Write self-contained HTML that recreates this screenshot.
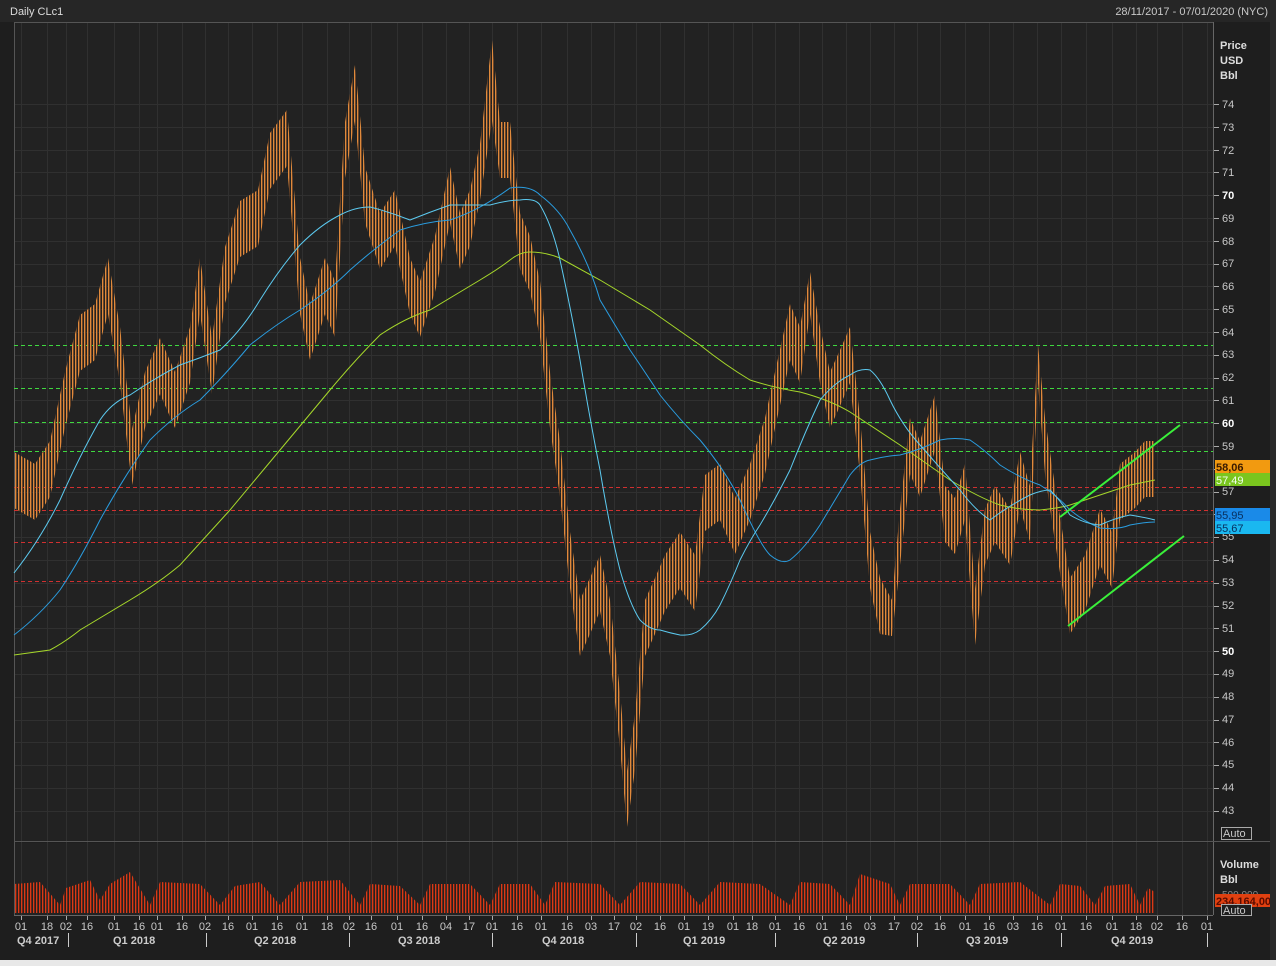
<!DOCTYPE html>
<html><head><meta charset="utf-8"><style>
body{margin:0;background:#1e1e1e;width:1276px;height:966px;overflow:hidden;font-family:"Liberation Sans",sans-serif}
svg{display:block}
text{font-family:"Liberation Sans",sans-serif;font-size:11px;fill:#c8c8c8}
</style></head><body>
<svg width="1276" height="966" xmlns="http://www.w3.org/2000/svg">
<defs>
<pattern id="ps" x="0" y="0" width="3" height="5" patternUnits="userSpaceOnUse"><rect x="0" y="0" width="1" height="5" fill="#e08a3c"/><rect x="1" y="0" width="1" height="5" fill="#6e4526"/></pattern>
<pattern id="vs" x="0" y="0" width="3" height="4" patternUnits="userSpaceOnUse"><rect x="0" y="0" width="1" height="4" fill="#d83a18"/><rect x="1" y="0" width="1" height="4" fill="#6a2414"/></pattern>
<pattern id="dg" x="14" y="0" width="7" height="2" patternUnits="userSpaceOnUse"><rect x="0" y="0" width="4" height="2" fill="#3fd83f"/></pattern>
<pattern id="dr" x="14" y="0" width="7" height="2" patternUnits="userSpaceOnUse"><rect x="0" y="0" width="4" height="2" fill="#d03030"/></pattern>
</defs>
<rect width="1276" height="966" fill="#1e1e1e"/>
<rect x="0" y="0" width="1276" height="22" fill="#262626"/>
<text x="10" y="15" style="fill:#dcdcdc">Daily CLc1</text>
<text x="1268" y="15" text-anchor="end">28/11/2017 - 07/01/2020 (NYC)</text>
<rect x="14" y="22" width="1199" height="819" fill="#222"/>
<rect x="14" y="843" width="1199" height="72" fill="#222"/>
<path fill="none" stroke="#303030" stroke-width="1" d="M21.5,22V915M47.5,22V915M66.5,22V915M87.5,22V915M114.5,22V915M139.5,22V915M157.5,22V915M182.5,22V915M205.5,22V915M228.5,22V915M252.5,22V915M277.5,22V915M302.5,22V915M327.5,22V915M349.5,22V915M371.5,22V915M397.5,22V915M422.5,22V915M446.5,22V915M469.5,22V915M492.5,22V915M517.5,22V915M541.5,22V915M567.5,22V915M591.5,22V915M614.5,22V915M636.5,22V915M660.5,22V915M684.5,22V915M708.5,22V915M733.5,22V915M752.5,22V915M775.5,22V915M799.5,22V915M822.5,22V915M846.5,22V915M870.5,22V915M894.5,22V915M917.5,22V915M940.5,22V915M965.5,22V915M989.5,22V915M1013.5,22V915M1037.5,22V915M1061.5,22V915M1086.5,22V915M1112.5,22V915M1136.5,22V915M1157.5,22V915M1182.5,22V915M1207.5,22V915
M14,104.5H1213M14,127.5H1213M14,150.5H1213M14,172.5H1213M14,195.5H1213M14,218.5H1213M14,241.5H1213M14,264.5H1213M14,286.5H1213M14,309.5H1213M14,332.5H1213M14,355.5H1213M14,378.5H1213M14,400.5H1213M14,423.5H1213M14,446.5H1213M14,469.5H1213M14,492.5H1213M14,514.5H1213M14,537.5H1213M14,560.5H1213M14,583.5H1213M14,606.5H1213M14,628.5H1213M14,651.5H1213M14,674.5H1213M14,697.5H1213M14,720.5H1213M14,742.5H1213M14,765.5H1213M14,788.5H1213M14,811.5H1213"/>
<path fill="none" stroke="#aaa" stroke-width="1" d="M1213,104.5h6M1213,127.5h6M1213,150.5h6M1213,172.5h6M1213,195.5h6M1213,218.5h6M1213,241.5h6M1213,264.5h6M1213,286.5h6M1213,309.5h6M1213,332.5h6M1213,355.5h6M1213,378.5h6M1213,400.5h6M1213,423.5h6M1213,446.5h6M1213,469.5h6M1213,492.5h6M1213,514.5h6M1213,537.5h6M1213,560.5h6M1213,583.5h6M1213,606.5h6M1213,628.5h6M1213,651.5h6M1213,674.5h6M1213,697.5h6M1213,720.5h6M1213,742.5h6M1213,765.5h6M1213,788.5h6M1213,811.5h6M21.5,915v5M47.5,915v5M66.5,915v5M87.5,915v5M114.5,915v5M139.5,915v5M157.5,915v5M182.5,915v5M205.5,915v5M228.5,915v5M252.5,915v5M277.5,915v5M302.5,915v5M327.5,915v5M349.5,915v5M371.5,915v5M397.5,915v5M422.5,915v5M446.5,915v5M469.5,915v5M492.5,915v5M517.5,915v5M541.5,915v5M567.5,915v5M591.5,915v5M614.5,915v5M636.5,915v5M660.5,915v5M684.5,915v5M708.5,915v5M733.5,915v5M752.5,915v5M775.5,915v5M799.5,915v5M822.5,915v5M846.5,915v5M870.5,915v5M894.5,915v5M917.5,915v5M940.5,915v5M965.5,915v5M989.5,915v5M1013.5,915v5M1037.5,915v5M1061.5,915v5M1086.5,915v5M1112.5,915v5M1136.5,915v5M1157.5,915v5M1182.5,915v5M1207.5,915v5"/>
<line x1="14" y1="22.5" x2="1213" y2="22.5" stroke="#555"/>
<line x1="14.5" y1="22" x2="14.5" y2="915" stroke="#555"/>
<line x1="1213.5" y1="22" x2="1213.5" y2="915" stroke="#666"/>
<line x1="14" y1="841.5" x2="1276" y2="841.5" stroke="#555"/>
<line x1="14" y1="915.5" x2="1213" y2="915.5" stroke="#666"/>
<rect x="14" y="345" width="1199" height="1" fill="url(#dg)"/>
<rect x="14" y="388" width="1199" height="1" fill="url(#dg)"/>
<rect x="14" y="422" width="1199" height="1" fill="url(#dg)"/>
<rect x="14" y="451" width="1199" height="1" fill="url(#dg)"/>
<rect x="14" y="487" width="1199" height="1" fill="url(#dr)"/>
<rect x="14" y="510" width="1199" height="1" fill="url(#dr)"/>
<rect x="14" y="542" width="1199" height="1" fill="url(#dr)"/>
<rect x="14" y="581" width="1199" height="1" fill="url(#dr)"/>
<polygon fill="url(#ps)" points="14,452 35,464 50,441 65,372 80,315 95,304 108,258 120,327 132,429 145,372 160,338 175,372 190,327 200,258 212,338 225,247 240,201 258,190 270,133 287,110 300,258 310,304 325,258 335,281 345,122 355,65 365,167 380,213 395,190 410,258 420,281 435,236 450,167 460,213 470,190 480,144 492,40 500,122 510,122 520,213 530,236 540,281 550,372 560,441 570,532 580,600 590,578 600,555 610,600 620,692 627,771 635,714 645,600 655,578 665,555 680,532 695,555 705,475 720,464 735,498 750,464 765,418 775,372 790,304 800,327 810,272 820,327 830,372 840,350 850,327 860,418 870,532 880,578 892,600 900,509 910,418 920,441 935,395 945,486 955,498 965,464 975,589 985,509 995,486 1010,509 1020,452 1030,486 1038,345 1045,418 1055,486 1070,578 1085,555 1100,509 1112,532 1120,464 1135,452 1145,441 1155,441 1155,497 1145,497 1135,508 1120,520 1112,588 1100,565 1085,611 1070,634 1055,542 1045,474 1038,383 1030,542 1020,508 1010,565 995,542 985,565 975,645 965,520 955,554 945,542 935,451 920,497 910,474 900,565 892,636 880,634 870,588 860,474 850,383 840,406 830,428 820,383 810,314 800,383 790,360 775,428 765,474 750,520 735,554 720,520 705,531 695,611 680,588 665,611 655,634 645,656 635,770 627,827 620,748 610,656 600,611 590,634 580,656 570,588 560,497 550,428 540,337 530,292 520,269 510,178 500,178 492,121 480,200 470,246 460,269 450,223 435,292 420,337 410,314 395,246 380,269 365,223 355,121 345,178 335,337 325,314 310,360 300,314 287,166 270,189 258,246 240,257 225,303 212,394 200,314 190,383 175,428 160,394 145,428 132,485 120,383 108,314 95,360 80,371 65,428 50,497 35,520 14,508"/>
<polygon fill="url(#vs)" points="14,884 40,882 60,905 66,888 90,880 100,900 110,884 130,872 150,905 160,882 200,884 220,905 235,886 260,882 280,905 300,882 340,880 360,905 370,884 400,886 420,905 430,884 470,884 490,905 500,884 530,884 545,905 555,882 600,884 620,905 640,882 680,884 700,905 720,882 760,884 790,905 800,882 830,884 850,905 860,874 890,884 900,905 910,884 950,884 970,905 980,884 1020,882 1050,905 1060,884 1080,886 1095,905 1105,886 1130,884 1140,905 1148,888 1155,892 1155,913 14,913"/>
<path fill="none" stroke="#a6d82a" stroke-width="1" d="M14,655 L50,650 Q65,642 80,630 L130,600 Q160,582 180,565 L230,510 L280,450 L330,390 Q355,360 380,335 Q405,318 430,310 L480,280 Q500,268 510,260 Q520,252 530,252 Q545,252 560,258 L600,280 L650,310 L700,345 Q725,365 750,380 Q775,388 800,392 Q830,400 850,412 L900,445 L950,480 Q980,498 1000,505 Q1020,510 1040,510 Q1060,508 1070,505 L1100,495 L1130,485 L1155,480"/>
<path fill="none" stroke="#2a9de0" stroke-width="1" d="M14,635 Q40,615 60,590 Q80,560 100,520 Q125,475 150,440 Q175,415 200,400 Q225,375 250,345 Q275,325 300,310 Q330,290 350,270 Q375,248 400,230 Q425,222 450,220 Q480,210 510,188 Q530,185 540,195 Q560,210 570,230 Q590,265 600,300 Q615,325 630,350 Q645,372 660,395 Q680,420 700,440 Q725,470 740,500 Q760,545 770,555 Q782,565 790,560 Q805,548 820,525 Q838,495 850,475 Q860,462 870,460 Q885,456 900,455 Q920,450 940,440 Q955,437 970,440 Q985,450 1000,465 Q1020,478 1040,485 Q1058,496 1070,510 Q1085,522 1100,528 Q1118,530 1130,525 Q1145,522 1155,522"/>
<path fill="none" stroke="#5ccaf0" stroke-width="1" d="M14,573 Q40,540 60,500 Q80,455 100,420 Q112,402 130,395 Q155,378 180,365 Q200,358 220,350 Q242,330 260,300 Q280,268 300,245 Q320,225 340,215 Q355,207 370,207 Q390,212 410,220 Q430,212 450,205 Q470,205 490,205 Q508,200 520,200 Q535,198 540,205 Q552,225 560,260 Q570,305 580,360 Q590,420 600,470 Q610,530 620,570 Q630,605 640,620 Q650,630 660,630 Q670,633 680,635 Q692,636 700,630 Q712,620 720,605 Q730,585 740,560 Q750,540 760,525 Q775,500 790,470 Q805,432 820,400 Q835,382 850,375 Q860,368 870,370 Q880,378 890,400 Q902,425 920,445 Q940,468 960,490 Q975,510 990,520 Q1010,505 1030,495 Q1042,490 1050,490 Q1060,500 1070,515 Q1085,524 1100,525 Q1115,518 1130,515 Q1143,517 1155,520"/>
<line x1="1060" y1="517" x2="1180" y2="425" stroke="#3af03a" stroke-width="2"/>
<line x1="1068" y1="626" x2="1184" y2="536" stroke="#3af03a" stroke-width="2"/>
<g>
<text x="1220" y="49" style="font-weight:bold;fill:#ddd">Price</text>
<text x="1220" y="64" style="font-weight:bold;fill:#ddd">USD</text>
<text x="1220" y="79" style="font-weight:bold;fill:#ddd">Bbl</text>
<text x="1222" y="108">74</text><text x="1222" y="131">73</text><text x="1222" y="154">72</text><text x="1222" y="176">71</text><text x="1222" y="199" style="font-weight:bold;fill:#fff">70</text><text x="1222" y="222">69</text><text x="1222" y="245">68</text><text x="1222" y="267">67</text><text x="1222" y="290">66</text><text x="1222" y="313">65</text><text x="1222" y="336">64</text><text x="1222" y="358">63</text><text x="1222" y="381">62</text><text x="1222" y="404">61</text><text x="1222" y="427" style="font-weight:bold;fill:#fff">60</text><text x="1222" y="450">59</text><text x="1222" y="495">57</text><text x="1222" y="540">55</text><text x="1222" y="563">54</text><text x="1222" y="586">53</text><text x="1222" y="609">52</text><text x="1222" y="632">51</text><text x="1222" y="655" style="font-weight:bold;fill:#fff">50</text><text x="1222" y="677">49</text><text x="1222" y="700">48</text><text x="1222" y="723">47</text><text x="1222" y="746">46</text><text x="1222" y="768">45</text><text x="1222" y="791">44</text><text x="1222" y="814">43</text>
<rect x="1221.5" y="827.5" width="30" height="12" fill="none" stroke="#aaa"/><text x="1223" y="837">Auto</text>
<rect x="1215" y="460" width="61" height="13" fill="#f29a10"/><text x="1216" y="471" style="font-weight:bold;fill:#3a1a00">58,06</text>
<rect x="1215" y="473" width="61" height="13" fill="#7ac51e"/><text x="1216" y="484" style="fill:#f0fff0">57,49</text>
<rect x="1215" y="508" width="61" height="13" fill="#1a8ae8"/><text x="1216" y="519" style="fill:#083060">55,95</text>
<rect x="1215" y="521" width="61" height="13" fill="#1ab8f0"/><text x="1216" y="532" style="fill:#083060">55,67</text>
<text x="1220" y="868" style="font-weight:bold;fill:#ddd">Volume</text>
<text x="1220" y="883" style="font-weight:bold;fill:#ddd">Bbl</text>
<text x="1222" y="898" style="font-size:10px;fill:#888">500,000</text>
<rect x="1215" y="894" width="61" height="13" fill="#e04010"/><text x="1216" y="905" style="font-weight:bold;fill:#5a0c00">234,164,00</text>
<rect x="1221.5" y="904.5" width="30" height="11" fill="#1e1e1e" stroke="#aaa"/><text x="1223" y="914">Auto</text>
</g>
<g>
<text x="17" y="944" style="font-weight:bold;fill:#ccc">Q4 2017</text>
<text x="113" y="944" style="font-weight:bold;fill:#ccc">Q1 2018</text>
<text x="254" y="944" style="font-weight:bold;fill:#ccc">Q2 2018</text>
<text x="398" y="944" style="font-weight:bold;fill:#ccc">Q3 2018</text>
<text x="542" y="944" style="font-weight:bold;fill:#ccc">Q4 2018</text>
<text x="683" y="944" style="font-weight:bold;fill:#ccc">Q1 2019</text>
<text x="823" y="944" style="font-weight:bold;fill:#ccc">Q2 2019</text>
<text x="966" y="944" style="font-weight:bold;fill:#ccc">Q3 2019</text>
<text x="1111" y="944" style="font-weight:bold;fill:#ccc">Q4 2019</text>
</g>
<g>
<text x="21" y="930" text-anchor="middle">01</text><text x="47" y="930" text-anchor="middle">18</text><text x="66" y="930" text-anchor="middle">02</text><text x="87" y="930" text-anchor="middle">16</text><text x="114" y="930" text-anchor="middle">01</text><text x="139" y="930" text-anchor="middle">16</text><text x="157" y="930" text-anchor="middle">01</text><text x="182" y="930" text-anchor="middle">16</text><text x="205" y="930" text-anchor="middle">02</text><text x="228" y="930" text-anchor="middle">16</text><text x="252" y="930" text-anchor="middle">01</text><text x="277" y="930" text-anchor="middle">16</text><text x="302" y="930" text-anchor="middle">01</text><text x="327" y="930" text-anchor="middle">18</text><text x="349" y="930" text-anchor="middle">02</text><text x="371" y="930" text-anchor="middle">16</text><text x="397" y="930" text-anchor="middle">01</text><text x="422" y="930" text-anchor="middle">16</text><text x="446" y="930" text-anchor="middle">04</text><text x="469" y="930" text-anchor="middle">17</text><text x="492" y="930" text-anchor="middle">01</text><text x="517" y="930" text-anchor="middle">16</text><text x="541" y="930" text-anchor="middle">01</text><text x="567" y="930" text-anchor="middle">16</text><text x="591" y="930" text-anchor="middle">03</text><text x="614" y="930" text-anchor="middle">17</text><text x="636" y="930" text-anchor="middle">02</text><text x="660" y="930" text-anchor="middle">16</text><text x="684" y="930" text-anchor="middle">01</text><text x="708" y="930" text-anchor="middle">19</text><text x="733" y="930" text-anchor="middle">01</text><text x="752" y="930" text-anchor="middle">18</text><text x="775" y="930" text-anchor="middle">01</text><text x="799" y="930" text-anchor="middle">16</text><text x="822" y="930" text-anchor="middle">01</text><text x="846" y="930" text-anchor="middle">16</text><text x="870" y="930" text-anchor="middle">03</text><text x="894" y="930" text-anchor="middle">17</text><text x="917" y="930" text-anchor="middle">02</text><text x="940" y="930" text-anchor="middle">16</text><text x="965" y="930" text-anchor="middle">01</text><text x="989" y="930" text-anchor="middle">16</text><text x="1013" y="930" text-anchor="middle">03</text><text x="1037" y="930" text-anchor="middle">16</text><text x="1061" y="930" text-anchor="middle">01</text><text x="1086" y="930" text-anchor="middle">16</text><text x="1112" y="930" text-anchor="middle">01</text><text x="1136" y="930" text-anchor="middle">18</text><text x="1157" y="930" text-anchor="middle">02</text><text x="1182" y="930" text-anchor="middle">16</text><text x="1207" y="930" text-anchor="middle">01</text>
</g>
<path stroke="#ccc" stroke-width="1" d="M68.5,933v14M206.5,933v14M349.5,933v14M492.5,933v14M636.5,933v14M775.5,933v14M917.5,933v14M1061.5,933v14M1207.5,933v14"/>
<rect x="1270" y="0" width="6" height="966" fill="#2a2a2a"/>
<rect x="0" y="960" width="1276" height="6" fill="#e8e8e8"/>
</svg>
</body></html>
